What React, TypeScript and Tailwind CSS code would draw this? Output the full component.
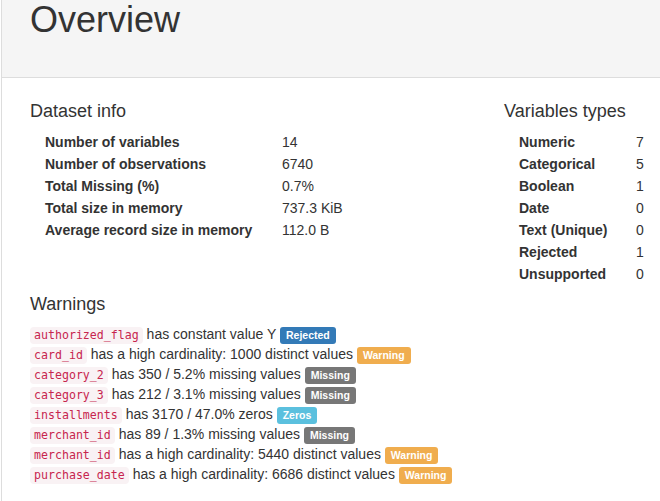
import React from 'react';

const datasetInfo: [string, string][] = [
  ['Number of variables', '14'],
  ['Number of observations', '6740'],
  ['Total Missing (%)', '0.7%'],
  ['Total size in memory', '737.3 KiB'],
  ['Average record size in memory', '112.0 B'],
];

const varTypes: [string, string][] = [
  ['Numeric', '7'],
  ['Categorical', '5'],
  ['Boolean', '1'],
  ['Date', '0'],
  ['Text (Unique)', '0'],
  ['Rejected', '1'],
  ['Unsupported', '0'],
];

type Kind = 'Rejected' | 'Warning' | 'Missing' | 'Zeros';

const labelColor: Record<Kind, string> = {
  Rejected: 'bg-[#337ab7]',
  Warning: 'bg-[#f0ad4e]',
  Missing: 'bg-[#777777]',
  Zeros: 'bg-[#5bc0de]',
};

const warnings: { col: string; text: string; kind: Kind }[] = [
  { col: 'authorized_flag', text: 'has constant value Y', kind: 'Rejected' },
  { col: 'card_id', text: 'has a high cardinality: 1000 distinct values', kind: 'Warning' },
  { col: 'category_2', text: 'has 350 / 5.2% missing values', kind: 'Missing' },
  { col: 'category_3', text: 'has 212 / 3.1% missing values', kind: 'Missing' },
  { col: 'installments', text: 'has 3170 / 47.0% zeros', kind: 'Zeros' },
  { col: 'merchant_id', text: 'has 89 / 1.3% missing values', kind: 'Missing' },
  { col: 'merchant_id', text: 'has a high cardinality: 5440 distinct values', kind: 'Warning' },
  { col: 'purchase_date', text: 'has a high cardinality: 6686 distinct values', kind: 'Warning' },
];

const Label: React.FC<{ kind: Kind }> = ({ kind }) => (
  <span
    className={`inline-block align-baseline text-[10.5px] font-bold leading-[12px] text-white px-[6px] pt-[2px] pb-[3px] rounded-[3px] ${labelColor[kind]}`}
  >
    {kind}
  </span>
);

const InfoTable: React.FC<{ rows: [string, string][]; labelWidth: string }> = ({ rows, labelWidth }) => (
  <table className="border-collapse">
    <tbody>
      {rows.map(([k, v]) => (
        <tr key={k} className="h-[22px]">
          <th className={`text-left font-bold pl-[15px] p-0 ${labelWidth}`}>{k}</th>
          <td className="p-0">{v}</td>
        </tr>
      ))}
    </tbody>
  </table>
);

export default function App() {
  return (
    <div className="pl-px h-[501px] overflow-hidden bg-white font-['Liberation_Sans',Arial,sans-serif] text-[14px] leading-[20px] text-[#333]">
      <div className="border-l border-[#ddd] h-full">
        {/* panel heading */}
        <div className="h-[78px] bg-[#f5f5f5] border-b border-[#ddd] pl-[28px]">
          <h1 className="text-[36px] leading-[1.1] font-normal">Overview</h1>
        </div>

        <div className="pl-[28px] pt-[24px]">
          <div className="flex">
            <div className="w-[474px]">
              <h4 className="text-[18px] leading-[1.1] mb-[9px]">Dataset info</h4>
              <InfoTable rows={datasetInfo} labelWidth="w-[252px]" />
            </div>
            <div>
              <h4 className="text-[18px] leading-[1.1] mb-[9px]">Variables types</h4>
              <InfoTable rows={varTypes} labelWidth="w-[132px]" />
            </div>
          </div>

          <h4 className="text-[18px] leading-[1.1] mt-[10px] mb-[9px]">Warnings</h4>
          <div>
            {warnings.map((w, i) => (
              <div key={i} className="leading-[20px] whitespace-nowrap">
                <code className="inline-block font-['DejaVu_Sans_Mono',monospace] text-[11.6px] leading-[13px] px-[4px] py-[2px] rounded-[4px] bg-[#f9f2f4] text-[#c7254e]">
                  {w.col}
                </code>{' '}
                {w.text} <Label kind={w.kind} />
              </div>
            ))}
          </div>
        </div>
      </div>
    </div>
  );
}
